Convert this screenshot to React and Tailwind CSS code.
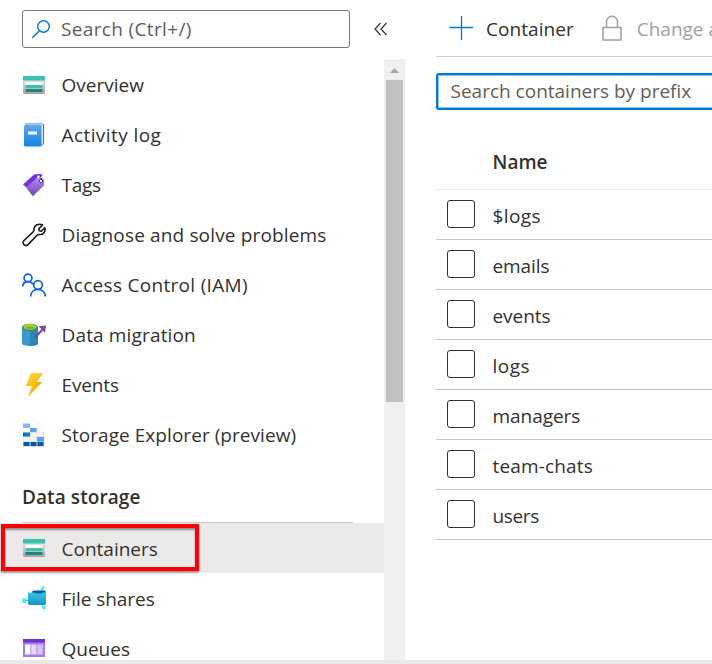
import React from 'react';

const StorageIcon = () => (
  <svg width="24" height="24" viewBox="0 0 24 24">
    <defs>
      <linearGradient id="stg" x1="0" y1="0" x2="0" y2="1">
        <stop offset="0" stopColor="#e4e4e4" />
        <stop offset="1" stopColor="#a3a3a3" />
      </linearGradient>
    </defs>
    <path d="M1 7h22v13a1 1 0 0 1-1 1H2a1 1 0 0 1-1-1z" fill="url(#stg)" />
    <path d="M1 3h22v4.500H1z" fill="#37c2b1" />
    <path d="M3.500 9h17v3h-17z" fill="#fff" />
    <path d="M3.500 12h17v3h-17z" fill="#37c2b1" />
    <path d="M3.500 16h17v3h-17z" fill="#258277" />
  </svg>
);

const BookIcon = () => (
  <svg width="24" height="24" viewBox="0 0 24 24">
    <defs>
      <linearGradient id="book" x1="0" y1="0" x2="0" y2="1">
        <stop offset="0" stopColor="#5ea8ef" />
        <stop offset="1" stopColor="#1585dc" />
      </linearGradient>
    </defs>
    <path d="M3.500.5H20.500a1.500 1.500 0 0 1 1.500 1.500v18.500l-2 2H4z" fill="#2878ad" />
    <path d="M4 1.200h17V20.500l-1.500 1.500z" fill="#d5ebf8" />
    <rect x="2" y="2" width="17.500" height="21.500" rx="1.500" fill="url(#book)" />
    <path d="M6 8.500h9v3H6z" fill="#fff" />
  </svg>
);

const TagIcon = () => (
  <svg width="24" height="24" viewBox="0 0 24 24">
    <defs>
      <linearGradient id="tag" x1="0" y1="0" x2="0" y2="1">
        <stop offset="0" stopColor="#b58be8" />
        <stop offset="1" stopColor="#7345ba" />
      </linearGradient>
    </defs>
    <path d="M1 11.500 12 1.500l7-.8 1.500 2L4.500 14.500z" fill="#7632d8" />
    <path d="M4 14.500 15 5l6 .2 1.200 1.600v5.500L10.800 23.200z" fill="url(#tag)" />
    <circle cx="16.500" cy="4" r="1.400" fill="#fff" />
    <circle cx="19" cy="8" r="1.700" fill="#fff" stroke="#552f99" strokeWidth="1" />
    <path d="M17.500 4.500q2.500.5 2 2.500" fill="none" stroke="#341a6e" strokeWidth="1" />
  </svg>
);

const WrenchIcon = () => (
  <svg width="24" height="24" viewBox="0 0 24 24" fill="none" stroke="#1b1a19" strokeWidth="1.600" strokeLinejoin="round">
    <path d="M20.600 1.900 16.800 5.700l.5 2 2 .5 3.500-3.500c1.300 3.700-1.600 7.300-5.500 6.800-1.100-.1-1.600.1-2.300.8l-8.700 9.100c-2.900 3-7.100-.9-4.300-3.900l9.100-8.700c.7-.7.900-1.200.8-2.300C11.500 2.800 16.500-.1 20.600 1.900Z" />
  </svg>
);

const PeopleIcon = () => (
  <svg width="24" height="24" viewBox="0 0 24 24" fill="none" stroke="#0f62dc" strokeWidth="1.700">
    <circle cx="6" cy="5" r="3.900" />
    <circle cx="16" cy="12" r="4.300" />
    <path d="M.8 13.500C1 7.500 9 7 11 11.500M8.600 23.500c.4-9.400 14.200-9.400 14.800 0" />
  </svg>
);

const MigrationIcon = () => (
  <svg width="24" height="24" viewBox="0 0 24 24">
    <path d="M0 4v16.500c0 3.300 16 3.300 16 0V4z" fill="#3a9bc9" />
    <path d="M8 6v17c5 0 8-1 8-2.500V4z" fill="#2e86b3" />
    <ellipse cx="8" cy="4.300" rx="8" ry="3.600" fill="#2f7ba0" />
    <ellipse cx="8" cy="4" rx="6.700" ry="3" fill="#a9d32a" />
    <ellipse cx="8" cy="4.800" rx="4" ry="1.400" fill="#7fae19" />
    <path d="m13 14.500 8-8.500" stroke="#804998" strokeWidth="2.200" />
    <path d="M16.500 3.200 24 2.500l-1 7.200z" fill="#804998" />
  </svg>
);

const BoltIcon = () => (
  <svg width="24" height="24" viewBox="0 0 24 24">
    <path d="M9 .5h12L14.500 9H20L6 23.500l4-10.500H4z" fill="#fec312" />
    <path d="M9 .5h12L4 13z" fill="#fdc92a" />
    <path d="M13 9h7L6 23.500 14 11z" fill="#f9b010" />
  </svg>
);

const ExplorerIcon = () => (
  <svg width="24" height="24" viewBox="0 0 24 24">
    <path d="M1 9.500h7.500V5H15v4h7v15H1z" fill="#d9dde2" />
    <path d="M1 .5h7V5H1z" fill="#83b9f9" />
    <path d="M8 5h6.500v4H8z" fill="#5ea0ef" />
    <path d="M1 9.500h7v4H1z" fill="#0078d4" />
    <path d="M8.500 9.800h6v3.700h-6zM15.200 9.500h6v4h-6zM1.500 14.300h6v4h-6zM8.500 14.300h6v4h-6z" fill="#f8f8f8" />
    <path d="M15 14h7v4.500h-7z" fill="#5ea0ef" />
    <path d="M1.500 19h6v4h-6zM8.500 19h6v4h-6zM15.500 19h6v4h-6z" fill="#005ba1" />
  </svg>
);

const FileShareIcon = () => (
  <svg width="24" height="24" viewBox="0 0 24 24">
    <defs>
      <linearGradient id="share" x1="0" y1="0" x2="0" y2="1">
        <stop offset="0" stopColor="#32c8ea" />
        <stop offset="1" stopColor="#1893c6" />
      </linearGradient>
    </defs>
    <path d="M2 14.500h6M18 7l3-5M20 17l2 5" stroke="#40bfe2" strokeWidth="1.300" />
    <path d="M10 5.500 12 4.500h11.500V10H10z" fill="#0a5a9e" />
    <path d="M6.500 6.500h6l1.500 1h5.500l1.500-1H24v11.500l-1.500 1H7.500l-1.500-1V7z" fill="url(#share)" />
    <circle cx="2.300" cy="14.500" r="2.400" fill="#50e6ff" />
    <circle cx="21" cy="2" r="1.700" fill="#50e6ff" />
    <circle cx="22" cy="21.500" r="2" fill="#50e6ff" />
  </svg>
);

const QueueIcon = () => (
  <svg width="24" height="24" viewBox="0 0 24 24">
    <path d="M1 6h22v15H1z" fill="#a67af4" />
    <path d="M1 3h22v3.500H1z" fill="#6f33d0" />
    <path d="M3 8.500h5.500v10H3z" fill="#fff" />
    <path d="M9.300 8.500h5.200v10H9.300z" fill="#e6dafb" />
    <path d="M15.200 8.500h5.600v10h-5.600z" fill="#d6c3f7" />
  </svg>
);

const menu = [
  ['Overview', StorageIcon, 'tracking-[0px]'],
  ['Activity log', BookIcon, 'tracking-[0.42px]'],
  ['Tags', TagIcon, 'tracking-[-0.3px]'],
  ['Diagnose and solve problems', WrenchIcon, 'tracking-[0.15px]'],
  ['Access Control (IAM)', PeopleIcon, 'tracking-[0.3px]'],
  ['Data migration', MigrationIcon, 'tracking-[0.15px]'],
  ['Events', BoltIcon, 'tracking-[-0.15px]'],
  ['Storage Explorer (preview)', ExplorerIcon, 'tracking-[0.05px]'],
];

const containers = [
  ['$logs', 'tracking-[0.4px]'],
  ['emails', 'tracking-[-0.1px]'],
  ['events', 'tracking-[-0.05px]'],
  ['logs', 'tracking-[0.5px]'],
  ['managers', 'tracking-[-0.05px]'],
  ['team-chats', 'tracking-[0.15px]'],
  ['users', 'tracking-[-0.35px]'],
];

function MenuItem({ label, Icon, tracking, active }) {
  return (
    <div className={`flex h-[50px] shrink-0 items-center gap-[15.500px] pl-[22px] ${active ? 'bg-[#ebeae8]' : ''}`}>
      <Icon />
      <span className={`whitespace-nowrap ${tracking}`}>{label}</span>
    </div>
  );
}

export default function App() {
  return (
    <div className="flex h-[664px] w-[712px] flex-col overflow-hidden bg-white font-['Open_Sans',sans-serif] text-[19px] leading-[26px] text-[#323130]">
      <div className="flex min-h-0 flex-1">
        <aside className="flex w-[405px] shrink-0 flex-col">
          <div className="flex h-[59px] shrink-0 items-start pl-[22px] pt-[10px]">
            <div className="flex h-[38px] w-[328px] items-center rounded-[3px] border border-[#7a7876] pl-[8px] text-[#605e5c]">
              <svg width="20" height="20" viewBox="0 0 20 20" fill="none" stroke="#0078d4" strokeWidth="1.400">
                <circle cx="12.500" cy="7.500" r="5.800" />
                <path d="m8.300 11.700-7 7" />
              </svg>
              <span className="ml-[10px] whitespace-nowrap tracking-[0.35px]">Search (Ctrl+/)</span>
            </div>
            <svg className="ml-[24px] mt-[12px]" width="14" height="14" viewBox="0 0 14 14" fill="none" stroke="#323130" strokeWidth="1.200">
              <path d="M6.500 1 1 7l5.500 6M12.500 1 7 7l5.500 6" />
            </svg>
          </div>
          <div className="flex min-h-0 flex-1">
            <nav className="relative flex w-[384px] flex-col overflow-hidden pt-px">
              {menu.map(([label, Icon, tracking]) => (
                <MenuItem key={label} label={label} Icon={Icon} tracking={tracking} />
              ))}
              <div className="ml-[22px] flex h-[63px] w-[331px] shrink-0 items-center border-b border-[#c8c6c4] pt-[12px] font-semibold">
                <span className="tracking-[0.08px]">Data storage</span>
              </div>
              <MenuItem label="Containers" Icon={StorageIcon} tracking="tracking-[0px] pt-[2px]" active />
              <MenuItem label="File shares" Icon={FileShareIcon} tracking="tracking-[-0.05px] pt-[2px]" />
              <MenuItem label="Queues" Icon={QueueIcon} tracking="tracking-[0px] pt-[2px]" />
              <div className="absolute left-px top-[465px] h-[47px] w-[198px] border-4 border-[#fb0007] shadow-[0_2px_2px_rgba(0,0,0,0.35),inset_0_2px_2px_rgba(0,0,0,0.4)]" />
            </nav>
            <div className="flex w-[21px] flex-col items-center bg-[#f0f0f0]">
              <svg width="21" height="21" viewBox="0 0 21 21">
                <path d="M6 14h9l-4.500-5z" fill="#a3a3a3" />
              </svg>
              <div className="h-[322px] w-[17px] bg-[#c1c1c1]" />
            </div>
          </div>
        </aside>
        <main className="ml-[31px] min-w-0 flex-1 overflow-hidden">
          <div className="flex h-[57px] w-[400px] items-center border-b border-[#d2d0ce] pb-px pl-[13px]">
            <svg width="24" height="24" viewBox="0 0 24 24" fill="none" stroke="#0078d4" strokeWidth="1.300">
              <path d="M12.500 0v24M.5 11.500h24" />
            </svg>
            <span className="ml-[13px] pt-[2px] tracking-[0.05px]">Container</span>
            <svg className="ml-[28px]" width="20" height="26" viewBox="0 0 20 26" fill="none" stroke="#a19f9d" strokeWidth="1.500">
              <path d="M1 12.500h18V25H1zM4.500 12.500V6.800a5.500 5.500 0 0 1 11 0v5.700" />
            </svg>
            <span className="ml-[15px] whitespace-nowrap pt-[2px] tracking-[0px] text-[#a19f9d]">Change access level</span>
          </div>
          <div className="mt-[16px] flex h-[37px] w-[400px] items-center rounded-[3px] border-2 border-[#0078d4] pb-[2px] pl-[12.500px] text-[#605e5c] shadow-[inset_0_0_0_1px_#8cc4ee]">
            <span className="tracking-[0px]">Search containers by prefix</span>
          </div>
          <div className="flex h-[80px] items-center border-b border-[#edebe9] pl-[56.500px] pt-[25px] font-semibold">
            <span className="tracking-[0px]">Name</span>
          </div>
          {containers.map(([name, tracking]) => (
            <div key={name} className="flex h-[50px] items-center border-b border-[#c8c6c4] pl-[11px]">
              <div className="mb-px h-[28px] w-[28px] rounded-[3px] border border-[#323130]" />
              <span className={`ml-[17.500px] pt-[3px] ${tracking}`}>{name}</span>
            </div>
          ))}
        </main>
      </div>
      <div className="h-[4px] shrink-0 bg-[#eaeaea]" />
    </div>
  );
}
